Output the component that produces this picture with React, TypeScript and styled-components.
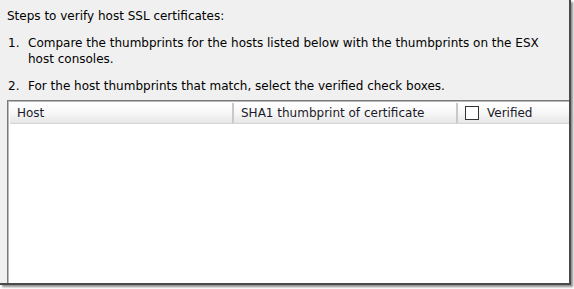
import { createGlobalStyle } from "styled-components";
import styled from "styled-components";

const GlobalStyle = createGlobalStyle`
  html, body {
    margin: 0;
    padding: 0;
    background: #ffffff;
  }
`;

export default function App() {
  return (
    <Page>
      <GlobalStyle />
      <Frame>
        <Title>Steps to verify host SSL certificates:</Title>
        <Steps>
          <Step>
            <StepNum>1.</StepNum>
            <StepText>
              Compare the thumbprints for the hosts listed below with the
              thumbprints on the ESX host consoles.
            </StepText>
          </Step>
          <Step>
            <StepNum>2.</StepNum>
            <StepText>
              For the host thumbprints that match, select the verified check
              boxes.
            </StepText>
          </Step>
        </Steps>
        <Grid>
          <HeaderRow>
            <HeaderCell $w={224}>Host</HeaderCell>
            <HeaderCell $w={224}>SHA1 thumbprint of certificate</HeaderCell>
            <HeaderCell $w={120}>
              <CheckBox />
              Verified
            </HeaderCell>
          </HeaderRow>
          <Body />
        </Grid>
      </Frame>
    </Page>
  );
}

const Page = styled.div`
  width: 574px;
  height: 289px;
  overflow: hidden;
  background: #ffffff;
`;

const Frame = styled.div`
  box-sizing: border-box;
  display: flex;
  flex-direction: column;
  width: 571px;
  height: 285px;
  background: #f0f0f0;
  border-right: 2px solid #4a4a4a;
  border-bottom: 2px solid #4a4a4a;
  box-shadow: 2px 2px 2px rgba(0, 0, 0, 0.45);
  overflow: hidden;
  font-family: "DejaVu Sans", Verdana, sans-serif;
  font-size: 12px;
  color: #000;
  padding: 9px 0 0 7px;
`;

const Title = styled.div`
  flex: none;
  line-height: 15px;
`;

const Steps = styled.div`
  flex: none;
  display: flex;
  flex-direction: column;
  gap: 11px;
  margin-top: 11px;
`;

const Step = styled.div`
  display: flex;
  line-height: 16px;
`;

const StepNum = styled.div`
  width: 20px;
  flex: none;
  padding-left: 1px;
`;

const StepText = styled.div`
  width: 520px;
`;

const Grid = styled.div`
  margin-top: 6px;
  display: flex;
  flex-direction: column;
  flex: 1 1 0;
  min-height: 0;
  border-top: 1px solid #7a7a7a;
  border-left: 1px solid #7a7a7a;
  box-shadow: inset 1px 1px 0 #b8b8b8;
  padding: 2px 0 0 2px;
  background: #ffffff;
`;

const HeaderRow = styled.div`
  display: flex;
  flex: none;
  height: 20px;
  background: linear-gradient(#ffffff 0%, #f7f7f7 50%, #e6e6e6 100%);
  border-bottom: 1px solid #d5d5d5;
`;

const HeaderCell = styled.div<{ $w: number }>`
  box-sizing: border-box;
  width: ${(p) => p.$w}px;
  flex: none;
  display: flex;
  align-items: center;
  gap: 8px;
  padding-left: 7px;
  border-right: 2px solid #c9c9c9;
  color: #1a1a2a;
`;

const CheckBox = styled.span`
  width: 12px;
  height: 12px;
  border: 1px solid #333;
  background: #fff;
`;

const Body = styled.div`
  flex: 1;
  background: #ffffff;
`;
